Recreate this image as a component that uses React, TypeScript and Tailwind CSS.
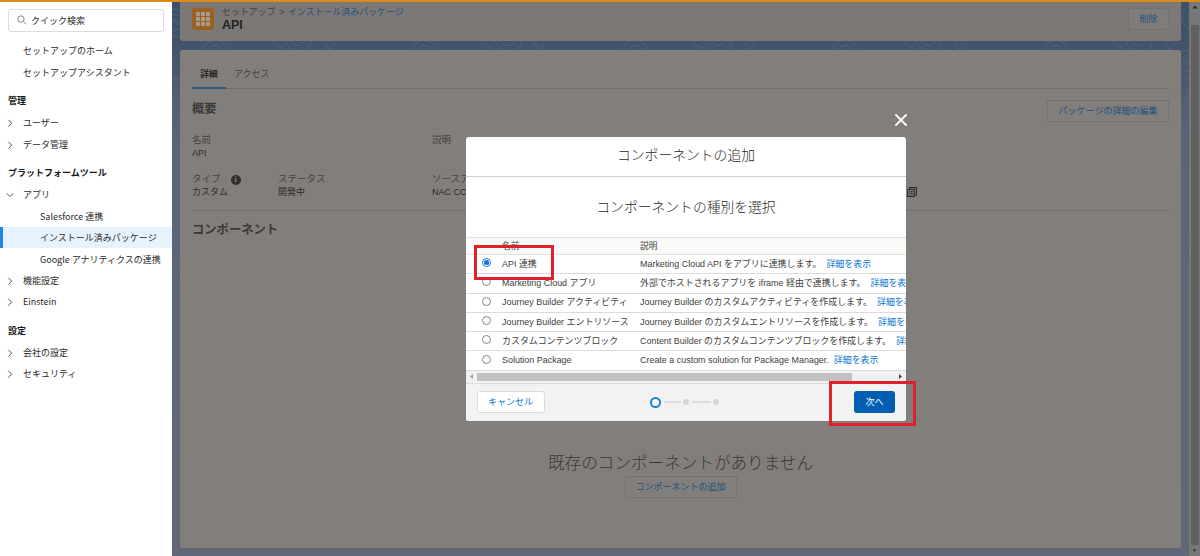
import type { ReactNode } from 'react';
import clsx from 'clsx';

interface NavEntry {
  label: string;
  kind: 'plain' | 'heading' | 'closed' | 'open' | 'child';
  active?: boolean;
}

interface ComponentType {
  name: string;
  description: string;
}

const NAV: NavEntry[] = [
  { label: 'セットアップのホーム', kind: 'plain' },
  { label: 'セットアップアシスタント', kind: 'plain' },
  { label: '管理', kind: 'heading' },
  { label: 'ユーザー', kind: 'closed' },
  { label: 'データ管理', kind: 'closed' },
  { label: 'プラットフォームツール', kind: 'heading' },
  { label: 'アプリ', kind: 'open' },
  { label: 'Salesforce 連携', kind: 'child' },
  { label: 'インストール済みパッケージ', kind: 'child', active: true },
  { label: 'Google アナリティクスの連携', kind: 'child' },
  { label: '機能設定', kind: 'closed' },
  { label: 'Einstein', kind: 'closed' },
  { label: '設定', kind: 'heading' },
  { label: '会社の設定', kind: 'closed' },
  { label: 'セキュリティ', kind: 'closed' },
];

const COMPONENT_TYPES: ComponentType[] = [
  { name: 'API 連携', description: 'Marketing Cloud API をアプリに連携します。' },
  { name: 'Marketing Cloud アプリ', description: '外部でホストされるアプリを iframe 経由で連携します。' },
  { name: 'Journey Builder アクティビティ', description: 'Journey Builder のカスタムアクティビティを作成します。' },
  { name: 'Journey Builder エントリソース', description: 'Journey Builder のカスタムエントリソースを作成します。' },
  { name: 'カスタムコンテンツブロック', description: 'Content Builder のカスタムコンテンツブロックを作成します。' },
  { name: 'Solution Package', description: 'Create a custom solution for Package Manager.' },
];

function Chevron({ open }: { open?: boolean }) {
  return (
    <svg viewBox="0 0 8 8" className="h-2 w-2" fill="none" stroke="#54524f" strokeWidth="1">
      <path d={open ? 'M0.8 2.4L4 5.6L7.2 2.4' : 'M2.4 0.8L5.6 4.2L2.4 7.6'} />
    </svg>
  );
}

function NavRow({ entry }: { entry: NavEntry }) {
  if (entry.kind === 'heading') {
    return (
      <div className="flex h-[29.3px] items-center pt-[6px] pl-2 font-bold text-[#181818]">{entry.label}</div>
    );
  }

  return (
    <div
      className={clsx(
        'flex h-[21.4px] items-center',
        entry.active && 'border-l-[3px] border-[#1b87e6] bg-[#e6f2fc]',
        entry.kind === 'child' && (entry.active ? 'pl-[37px]' : 'pl-10'),
        entry.kind === 'plain' && 'pl-[23px]',
        (entry.kind === 'closed' || entry.kind === 'open') && 'gap-[9px] pl-[6px]'
      )}
    >
      {(entry.kind === 'closed' || entry.kind === 'open') && (
        <span className="pt-px">
          <Chevron open={entry.kind === 'open'} />
        </span>
      )}
      <span>{entry.label}</span>
    </div>
  );
}

function Sidebar() {
  return (
    <aside className="w-[172px] shrink-0 bg-white text-[9px] leading-none whitespace-nowrap text-[#2b2a29]">
      <div className="mx-2 mt-[7px] mb-[8.1px] flex h-[23px] w-[156px] items-center gap-[4px] rounded-[3px] border border-[#dddbda] pb-[1px] pl-[8px]">
        <svg viewBox="0 0 10 10" className="h-[10px] w-[10px]" fill="none" stroke="#8a8886" strokeWidth="1">
          <circle cx="4" cy="4" r="3.2" />
          <path d="M6.3 6.3L9.4 9.4" />
        </svg>
        <span>クイック検索</span>
      </div>
      {NAV.map((entry) => (
        <NavRow key={entry.label} entry={entry} />
      ))}
    </aside>
  );
}

function Contours({ x, y }: { x: number; y: number }) {
  return (
    <g transform={`translate(${x} ${y})`}>
      <path d="M-7 4C-9 -3 -3 -8 3 -6S10 3 6 7S-5 10 -7 4Z" />
      <path d="M-12 5C-15 -5 -6 -14 4 -11S17 4 11 12S-9 15 -12 5Z" />
      <path d="M-3 3L0 -2L3 4L5 0" />
    </g>
  );
}

function TopographicBackground() {
  return (
    <svg className="absolute inset-0 h-full w-full" viewBox="0 0 1017 554" preserveAspectRatio="none">
      <defs>
        <linearGradient id="sky" x1="0" y1="0" x2="0" y2="1">
          <stop offset="0" stopColor="#3d5069" />
          <stop offset="0.08" stopColor="#42546d" />
          <stop offset="0.25" stopColor="#5b6578" />
          <stop offset="1" stopColor="#626777" />
        </linearGradient>
      </defs>
      <rect width="1017" height="554" fill="url(#sky)" />
      <g fill="none" stroke="#667b92" strokeWidth="0.7" opacity="0.6">
        {[0, 208, 416, 624, 832].map((offset) => (
          <g key={offset} transform={`translate(${offset} 0)`}>
            <Contours x={42} y={50} />
            <Contours x={124} y={34} />
            <path d="M100 39C103 46 108 44 111 47M150 40L155 48L162 40" />
          </g>
        ))}
        <Contours x={2} y={19} />
        <Contours x={1} y={88} />
        <Contours x={1012} y={14} />
        <Contours x={1004} y={60} />
        <Contours x={1016} y={98} />
      </g>
    </svg>
  );
}

function DimButton({ children, className }: { children: ReactNode; className?: string }) {
  return (
    <button
      className={clsx(
        'flex h-[22px] shrink-0 items-center justify-center rounded-[2px] border border-[#757372] text-[9px] leading-none text-[#24537d]',
        className
      )}
    >
      {children}
    </button>
  );
}

function Field({ label, value, className, info }: { label: string; value?: string; className?: string; info?: boolean }) {
  return (
    <div className={clsx('shrink-0', className)}>
      <div className="flex h-[13px] items-center gap-[10px] text-[9.5px] text-[#454341]">
        {label}
        {info && (
          <span className="mt-[2px] flex h-[10px] w-[10px] items-center justify-center rounded-full bg-[#31302f] font-['Liberation_Serif',serif] text-[8px] font-bold text-[#85827f]">
            i
          </span>
        )}
      </div>
      <div className="flex h-[14px] items-center pt-[1px] text-[9px] text-[#2d2b2a]">{value}</div>
    </div>
  );
}

function PackagePage() {
  return (
    <main className="relative flex min-w-0 flex-1 leading-none whitespace-nowrap">
      <TopographicBackground />
      <div className="relative flex flex-1 flex-col gap-[9px] pr-2 pb-2 pl-2">
        <header className="flex h-[39px] shrink-0 items-start rounded-b-[3px] bg-[#7b7876] pr-3 pl-3">
          <div className="mt-[6px] grid h-[22px] w-[22px] grid-cols-3 place-content-center gap-[1.5px] rounded-[3px] bg-[#9c6023] px-[4px]">
            {Array.from({ length: 9 }, (_, i) => (
              <span key={i} className="h-[3.5px] rounded-[1px] bg-[#a49d96]" />
            ))}
          </div>
          <div className="ml-2 flex-1">
            <div className="mt-[5px] flex h-[11px] items-center text-[8.95px] text-[#454341]">
              セットアップ<span className="mx-[3.5px]">&gt;</span>
              <span className="text-[#24537d]">インストール済みパッケージ</span>
            </div>
            <div className="flex h-[14px] items-center text-[12.5px] font-bold text-[#242322]">API</div>
          </div>
          <DimButton className="mt-[6px] w-[41px] bg-[#7f7c7a]">削除</DimButton>
        </header>

        <section className="flex flex-1 flex-col rounded-[3px] bg-[#827e7c] px-3">
          <div className="flex h-[39px] items-end border-b border-[#6f6e6d]">
            <div className="-mb-px flex h-[28px] w-[34px] items-center justify-center border-b-2 border-[#2c5d84] text-[8.7px] font-bold text-[#262524]">
              詳細
            </div>
            <div className="flex h-[27px] items-center pl-2 text-[9px] text-[#454341]">アクセス</div>
          </div>
          <div className="mt-[11px] flex items-start justify-between">
            <h2 className="mt-px flex h-[17px] items-center text-[12.2px] font-bold text-[#3b3938]">概要</h2>
            <DimButton className="w-[122px]">パッケージの詳細の編集</DimButton>
          </div>
          <div className="mt-[11px] flex">
            <Field label="名前" value="API" className="w-[240px]" />
            <Field label="説明" />
          </div>
          <div className="mt-[12px] flex">
            <Field label="タイプ" value="カスタム" className="w-[86px]" info />
            <Field label="ステータス" value="開発中" className="w-[154px]" />
            <Field label="ソースアカウント" value="NAC CO" className="w-[475px]" />
            <svg viewBox="0 0 10 10" className="mt-[15px] h-[10px] w-[10px]" fill="none" stroke="#2d2b2a" strokeWidth="1.1">
              <path d="M2.5 2.2V0.6H9.4V8H8" />
              <path d="M0.7 2.5H7.3V9.4H0.7Z" />
              <path d="M2.2 4.7H5.8M2.2 6.7H5.8" />
            </svg>
          </div>
          <div className="mt-[11px] border-t border-[#6f6e6d]" />
          <h2 className="mt-[11px] flex h-[16px] items-center text-[12.3px] font-bold text-[#3b3938]">コンポーネント</h2>
          <div className="mt-[215px] flex flex-col items-center">
            <p className="flex h-[22px] items-center text-[16.6px] font-light text-[#3a3836]">
              既存のコンポーネントがありません
            </p>
            <DimButton className="mt-px w-[112px]">コンポーネントの追加</DimButton>
          </div>
        </section>
      </div>
      <div className="relative flex w-[11px] flex-col items-center bg-[#787777]">
        <svg viewBox="0 0 6 4" className="mt-[3px] h-[4px] w-[6px] shrink-0">
          <path d="M0.5 3.5L3 0.5L5.5 3.5Z" fill="#2b2b2b" />
        </svg>
        <div className="mt-[16px] w-[8px] flex-1 bg-[#626161]" />
        <svg viewBox="0 0 6 4" className="my-[4px] h-[3px] w-[5px] shrink-0">
          <path d="M0.5 0.5L3 3.5L5.5 0.5Z" fill="#2b2b2b" />
        </svg>
      </div>
    </main>
  );
}

function Progress() {
  return (
    <div className="flex items-center">
      <span className="h-[11px] w-[11px] rounded-full border-[2.5px] border-[#1b82d8] bg-white" />
      <span className="ml-[3px] h-[2px] w-[17px] bg-[#dddbd9]" />
      <span className="ml-[2px] h-[6px] w-[6px] rounded-full bg-[#d8d6d4]" />
      <span className="ml-[3px] h-[2px] w-[19px] bg-[#dddbd9]" />
      <span className="ml-[2px] h-[6px] w-[6px] rounded-full bg-[#d8d6d4]" />
    </div>
  );
}

function AddComponentModal() {
  return (
    <div className="absolute top-[137px] left-[466px] flex h-[284px] w-[440px] flex-col overflow-hidden rounded-[3px] bg-white leading-none whitespace-nowrap text-[#3e3e3c]">
      <h1 className="flex h-[40px] shrink-0 items-center justify-center border-b border-[#d4d2d0] pb-[1px] text-[13.8px] font-light text-[#2b2826]">
        コンポーネントの追加
      </h1>
      <h2 className="flex h-[60px] shrink-0 items-center justify-center pt-[2px] text-[13.8px] font-light text-[#2b2826]">
        コンポーネントの種別を選択
      </h2>
      <div className="flex h-[18px] shrink-0 items-center border-y border-[#e3e1e0] bg-[#fafaf9] pl-9 text-[8.7px]">
        <span className="w-[138px] shrink-0">名前</span>
        <span>説明</span>
      </div>
      {COMPONENT_TYPES.map((type, i) => (
        <div key={type.name} className="flex h-[19.3px] shrink-0 items-center border-b border-[#dddbda] text-[8.95px]">
          <span
            className={clsx(
              'mr-[11px] mb-[3px] ml-4 flex h-[9px] w-[9px] shrink-0 items-center justify-center rounded-full border',
              i === 0 ? 'border-[#1675e0]' : 'border-[#858585]'
            )}
          >
            {i === 0 && <span className="h-[5px] w-[5px] rounded-full bg-[#0b6fe4]" />}
          </span>
          <span className="w-[138px] shrink-0">{type.name}</span>
          <span className="shrink-0">{type.description}</span>
          <span className="ml-[5px] shrink-0 text-[#0b76d3]">詳細を表示</span>
        </div>
      ))}
      <div className="flex h-[12px] shrink-0 items-center bg-[#f1f1f1] px-[4px]">
        <svg viewBox="0 0 3 5" className="h-[5px] w-[3px]">
          <path d="M3 0L0 2.5L3 5Z" fill="#9c9c9c" />
        </svg>
        <div className="ml-[4px] h-[8px] w-[375px] bg-[#c1c1c1]" />
        <svg viewBox="0 0 3 5" className="ml-auto h-[5px] w-[3px]">
          <path d="M0 0L3 2.5L0 5Z" fill="#404040" />
        </svg>
      </div>
      <footer className="flex flex-1 items-center border-t border-[#dddbda] bg-[#f3f2f2] pr-[11px] pl-[10.5px] text-[9px]">
        <button className="flex h-[22px] w-[68px] items-center justify-center rounded-[3px] border border-[#dddbda] bg-white text-[#0b76d3]">
          キャンセル
        </button>
        <div className="ml-[105px]">
          <Progress />
        </div>
        <button className="ml-auto flex h-[22px] w-[41px] items-center justify-center rounded-[3px] bg-[#005fb2] text-white">
          次へ
        </button>
      </footer>
    </div>
  );
}

export default function App() {
  return (
    <div className="relative flex h-[556px] w-[1200px] flex-col overflow-hidden bg-white font-['Liberation_Sans','Noto_Sans_CJK_JP',sans-serif]">
      <div className="h-[2px] shrink-0 bg-[#dc8a18]" />
      <div className="flex min-h-0 flex-1">
        <div className="flex font-['Noto_Sans_CJK_JP',sans-serif]">
          <Sidebar />
        </div>
        <PackagePage />
      </div>

      <svg
        viewBox="0 0 12 12"
        className="absolute top-[114px] left-[895px] h-[12px] w-[12px]"
        stroke="#fff"
        strokeWidth="1.8"
        strokeLinecap="round"
      >
        <path d="M1 1L11 11M11 1L1 11" />
      </svg>
      <AddComponentModal />

      {/* callouts */}
      <div className="absolute top-[245px] left-[474px] h-[35px] w-[80px] border-[3px] border-[#e0202a]" />
      <div className="absolute top-[381px] left-[829px] h-[45px] w-[87px] border-[3px] border-[#e0202a]" />
    </div>
  );
}
